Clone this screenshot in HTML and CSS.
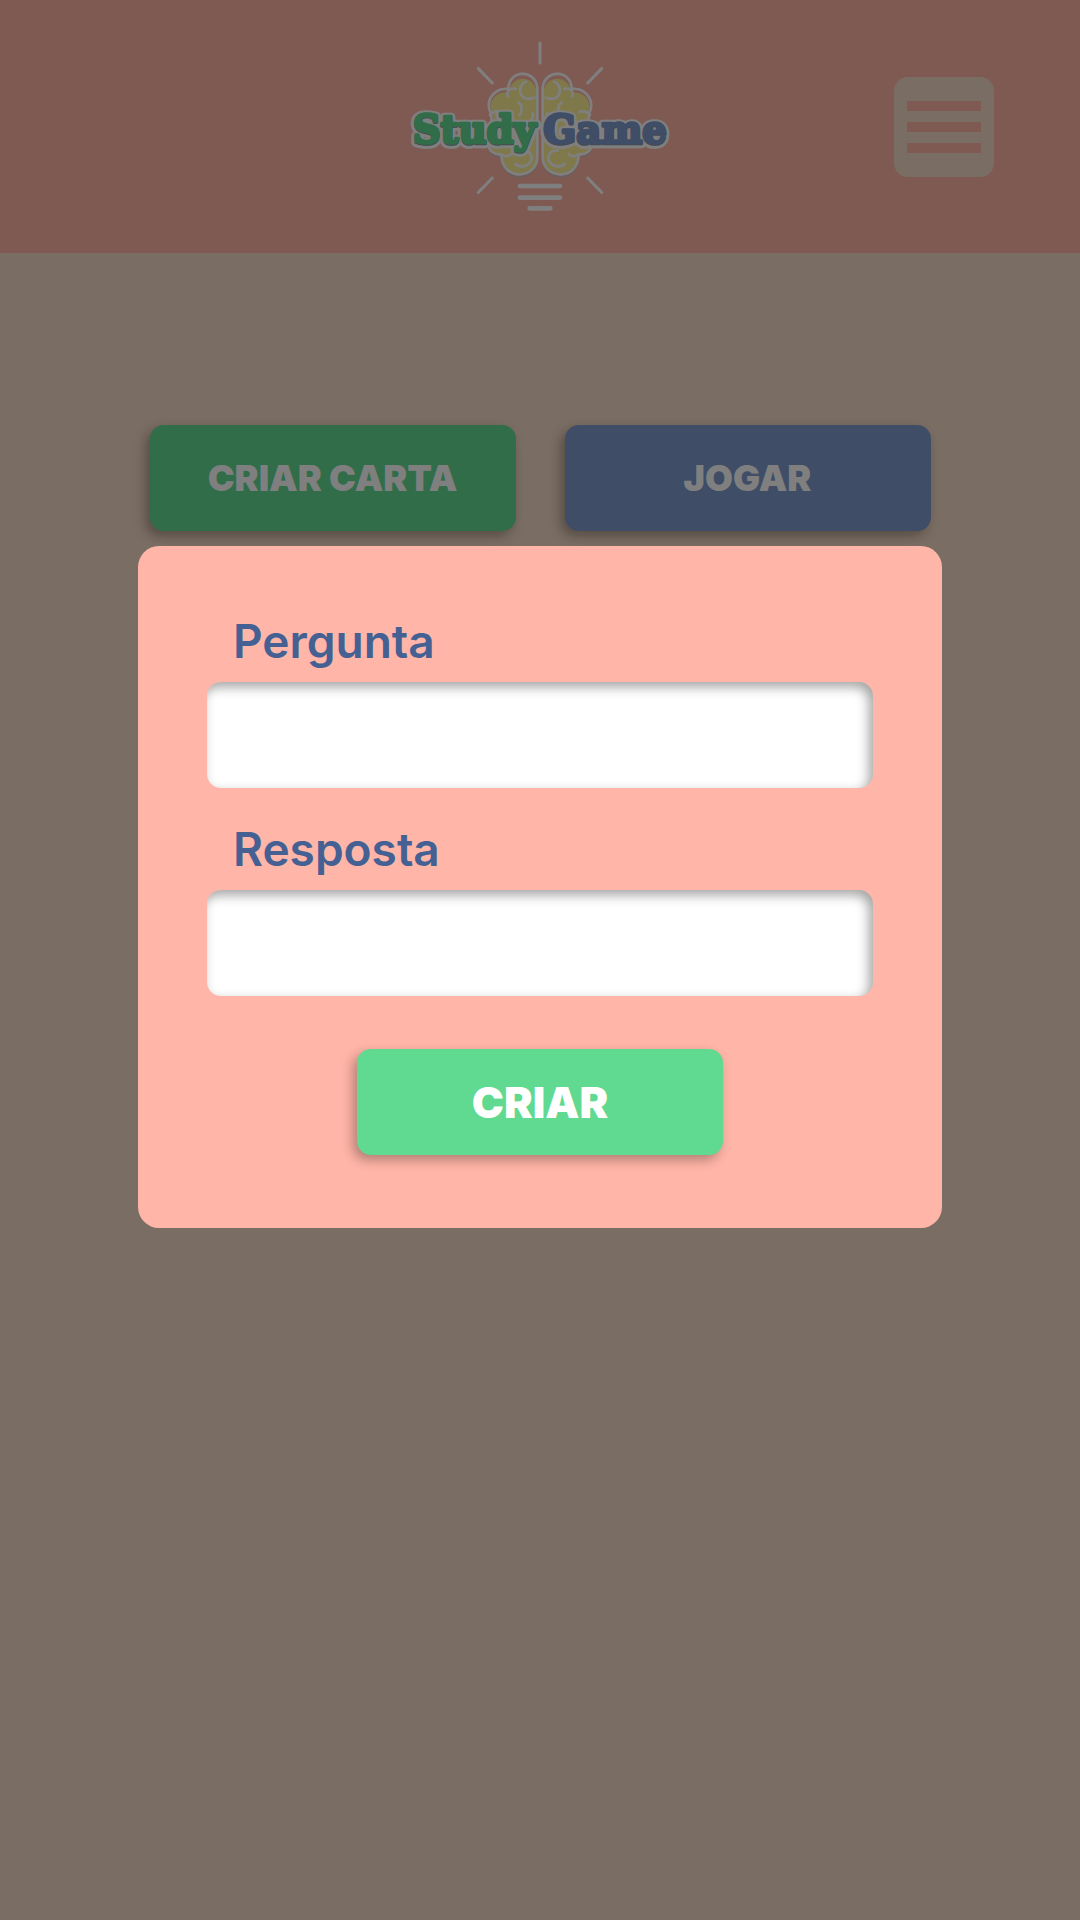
FILE: index.html
```html
<!DOCTYPE html>
<html lang="pt-BR">
<head>
<meta charset="utf-8">
<meta name="viewport" content="width=device-width, initial-scale=1">
<title>StudyGame</title>
<link rel="stylesheet" href="styles.css">
</head>
<body>
<header class="header">
  <svg class="logo" viewBox="0 -9 840 600" role="img" aria-label="StudyGame">
    <defs>
      <g id="half">
        <path class="brain-shade" d="M262 350C268 376 286 386 302 382C302 420 328 446 360 444C394 442 415 415 415 388V350Z"/>
        <path class="brain-fill" d="M409 188C407 135 333 130 327 188C290 182 268 208 273 238C283 252 278 270 278 290L264 345C270 365 286 374 304 372C302 412 328 434 360 433C392 431 410 408 410 382Z"/>
        <path class="brain-line" d="M304 372C304 410 328 434 360 433C392 431 412 408 412 382V178C412 118 326 115 325 177C287 172 260 205 268 238C276 252 275 268 275 285"/>
        <path class="brain-line" d="M378 155C357 162 355 191 371 202C380 208 394 207 403 203M325 200C316 185 330 172 347 177M270 255C278 245 290 242 303 246M355 217C369 226 366 247 359 256M398 250C402 260 395 272 386 278M303 373C315 382 330 380 334 371M367 362C394 359 401 385 389 399C378 412 356 412 347 402M264 345C268 362 282 374 302 373"/>
      </g>
    </defs>
    <g class="rays">
      <path d="M420 39V99M235 116L277 159M605 116L563 159M277 444L235 487M563 444L605 487"/>
    </g>
    <use href="#half"/>
    <use href="#half" transform="matrix(-1 0 0 1 840 0)"/>
    <path class="base" d="M360 468H480M360 503H480M389 535H451"/>
    <g class="wordmark">
      <g class="wordmark-edge"><text x="38" y="343">Study</text><text x="430" y="343">Game</text></g>
      <g class="wordmark-shade"><text x="38" y="343">Study</text><text x="430" y="343">Game</text></g>
      <text class="study" x="38" y="339">Study</text>
      <text class="game" x="430" y="339">Game</text>
    </g>
  </svg>
  <button class="menu" type="button" aria-label="Menu">
    <span class="menu-bar"></span>
    <span class="menu-bar"></span>
    <span class="menu-bar"></span>
  </button>
</header>
<main class="actions">
  <button class="btn btn-green" type="button">CRIAR CARTA</button>
  <button class="btn btn-blue" type="button">JOGAR</button>
</main>
<div class="overlay">
  <form class="modal" role="dialog" aria-label="Criar carta">
    <div class="field">
      <label for="pergunta">Pergunta</label>
      <input id="pergunta" type="text">
    </div>
    <div class="field">
      <label for="resposta">Resposta</label>
      <input id="resposta" type="text">
    </div>
    <button class="btn btn-green btn-submit" type="button">CRIAR</button>
  </form>
</div>
</body>
</html>
```
FILE: styles.css
```css
* {
  box-sizing: border-box;
}

body {
  margin: 0;
  min-height: 100vh;
  background: #f4dac6;
  font-family: Inter, "Open Sans", sans-serif;
}

.header {
  display: grid;
  grid-template-columns: 1fr auto 1fr;
  align-items: center;
  padding: 27px 86px 26px;
  background: #ffb5a7;
}

.logo {
  grid-column: 2;
  width: 280px;
  height: 200px;
}

.rays,
.base,
.brain-line {
  fill: none;
  stroke: #fff;
  stroke-linecap: round;
  stroke-linejoin: round;
}

.rays {
  stroke-width: 9;
}

.base {
  stroke-width: 14;
}

.brain-line {
  stroke-width: 8;
}

.brain-shade {
  fill: #d9bcb8;
}

.brain-fill {
  fill: #fff094;
}

.wordmark {
  font: bold 116px "DejaVu Serif", serif;
  stroke-linejoin: round;
}

.wordmark-edge {
  fill: #fff;
  stroke: #fff;
  stroke-width: 26;
}

.wordmark-shade {
  fill: #8a95a0;
  stroke: #8a95a0;
  stroke-width: 8;
}

.study {
  fill: #60da90;
  stroke: #60da90;
  stroke-width: 8;
}

.game {
  fill: #809acc;
  stroke: #809acc;
  stroke-width: 8;
}

.menu {
  justify-self: end;
  display: flex;
  flex-direction: column;
  justify-content: center;
  gap: 11px;
  width: 100px;
  height: 100px;
  padding: 0 13px;
  border: 0;
  border-radius: 14px;
  background: #f4dac6;
}

.menu-bar {
  height: 10px;
  background: #ffb5a7;
}

.actions {
  display: flex;
  justify-content: center;
  gap: 49px;
  padding: 172px 24px 24px;
}

.btn {
  width: 366px;
  height: 106px;
  padding: 0;
  border: 0;
  border-radius: 14px;
  box-shadow: -4px 5px 12px rgba(0, 0, 0, 0.3);
  color: #fff;
  font-family: inherit;
  font-size: 36px;
  font-weight: 900;
}

.btn-green {
  background: #60da90;
}

.btn-blue {
  background: #809acc;
}

.overlay {
  position: fixed;
  inset: 0;
  display: flex;
  justify-content: center;
  align-items: flex-start;
  padding: 546px 24px 24px;
  overflow: auto;
  background: rgba(0, 0, 0, 0.5);
}

.modal {
  display: flex;
  flex-direction: column;
  gap: 34px;
  width: 100%;
  max-width: 804px;
  padding: 68px 69px 73px;
  border-radius: 21px;
  background: #ffb5a7;
}

.field {
  display: flex;
  flex-direction: column;
  gap: 14px;
}

.field label {
  padding-left: 26px;
  color: #456194;
  font-size: 46px;
  font-weight: 600;
  line-height: 54px;
}

.field input {
  width: 100%;
  height: 106px;
  padding: 0 26px;
  border: 0;
  border-radius: 14px;
  background: #fff;
  box-shadow: inset -4px 5px 12px rgba(0, 0, 0, 0.36);
  font-family: inherit;
  font-size: 36px;
}

.btn-submit {
  align-self: center;
  margin-top: 19px;
  font-size: 43px;
}
```
